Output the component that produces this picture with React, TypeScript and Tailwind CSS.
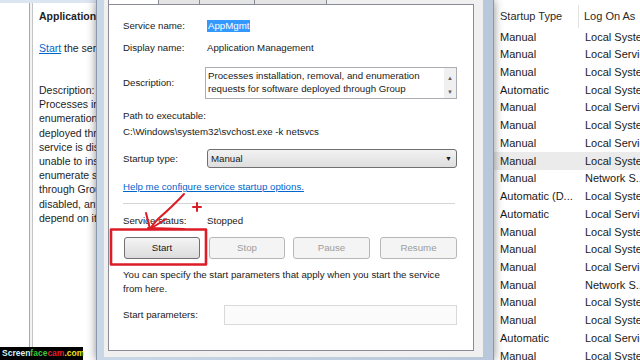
const services: [string, string][] = [
  ["Manual", "Local System"],
  ["Manual", "Local Service"],
  ["Manual", "Local System"],
  ["Automatic", "Local System"],
  ["Manual", "Local Service"],
  ["Manual", "Local System"],
  ["Manual", "Local Service"],
  ["Manual", "Local System"],
  ["Manual", "Network S..."],
  ["Automatic (D...", "Local System"],
  ["Automatic", "Local Service"],
  ["Manual", "Local System"],
  ["Manual", "Local System"],
  ["Manual", "Local Service"],
  ["Manual", "Network S..."],
  ["Manual", "Local System"],
  ["Manual", "Local System"],
  ["Automatic", "Local Service"],
  ["Manual", "Local System"],
]

const descLines = [
  "Description:",
  "Processes installation, removal, and",
  "enumeration requests for software",
  "deployed through Group Policy. If the",
  "service is disabled, users will be",
  "unable to install, remove, or",
  "enumerate software deployed",
  "through Group Policy. If this service is",
  "disabled, any services that explicitly",
  "depend on it will fail to start.",
]

function LeftPane() {
  return (
    <div className="flex h-full w-[96px] flex-none flex-col bg-white">
      <div className="h-[3px] bg-[#dce6f2]" />
      <div className="flex flex-1">
        <div className="w-[29px] bg-white" />
        <div className="w-px bg-[#a9a9a9]" />
        <div className="w-[2px] bg-[#f3f3f3]" />
        <div className="w-px bg-[#c4c4c4]" />
        <div className="min-w-0 flex-1 overflow-hidden whitespace-nowrap pl-[6px] pt-[6px] text-[10.5px] leading-[14px] text-[#1e1e1e]">
          <div className="font-bold">Application Management</div>
          <div className="mt-[18px]">
            <span className="text-[#0066cc] underline">Start</span> the service
          </div>
          <div className="mt-[28px] leading-[14.2px]">
            {descLines.map((l) => (
              <div key={l}>{l}</div>
            ))}
          </div>
        </div>
      </div>
    </div>
  )
}

function Button({ label, enabled, className }: { label: string; enabled?: boolean; className: string }) {
  return (
    <div
      className={
        enabled
          ? `flex h-[22px] items-center justify-center rounded-[3px] border border-[#707070] bg-gradient-to-b from-[#f4f4f4] to-[#dcdcdc] text-[#1a1a1a] ${className}`
          : `flex h-[22px] items-center justify-center rounded-[3px] border border-[#b5b8bb] bg-[#f4f4f4] text-[#9c9c9c] ${className}`
      }
    >
      {label}
    </div>
  )
}

function Dialog() {
  return (
    <div className="relative z-10 flex h-full w-[398px] flex-none flex-col border-x border-[#8a9aac] bg-gradient-to-r from-[#c9d7e6] to-[#b8c8da] pb-[3px] pl-[7px] pr-[10px] shadow-[0_0_9px_rgba(0,0,0,0.45)]">
      <div className="flex flex-1 flex-col bg-[#f0f0f0] pb-[6px] pl-[4px] pr-[9px]">
        <div className="flex h-[4px]">
          <div className="w-[50px] border-l border-[#898c95] bg-white" />
          <div className="w-[42px] border-x border-[#898c95] bg-[#e4e4e4]" />
          <div className="w-[55px] border-r border-[#898c95] bg-[#e4e4e4]" />
          <div className="w-[72px] border-r border-[#898c95] bg-[#e4e4e4]" />
        </div>
        <div className="flex flex-1 flex-col border border-[#898c95] bg-white pl-[14px] pt-[14px] text-[9.7px] leading-[14px] text-[#1a1a1a]">
          <div className="flex h-[14px] items-center">
            <div className="w-[84px]">Service name:</div>
            <div className="flex h-[12px] items-center bg-[#3399ff] px-px text-white">AppMgmt</div>
          </div>
          <div className="mt-[8px] flex h-[14px] items-center">
            <div className="w-[84px]">Display name:</div>
            <div>Application Management</div>
          </div>
          <div className="mt-[12px] flex h-[32px] items-center">
            <div className="w-[82px]">Description:</div>
            <div className="flex h-[32px] w-[252px] border border-[#abadb3] bg-white">
              <div className="flex-1 pl-[2px] pt-[1px] leading-[13px]">
                <div>Processes installation, removal, and enumeration</div>
                <div>requests for software deployed through Group</div>
              </div>
              <div className="flex w-[12px] flex-col items-center bg-[#f0f0f0] pt-[3px] text-[6px] leading-[14px] text-[#606060]">
                <div>▲</div>
                <div>▼</div>
              </div>
            </div>
          </div>
          <div className="mt-[10px] flex h-[14px] items-center">Path to executable:</div>
          <div className="mt-[2px] flex h-[14px] items-center">C:\Windows\system32\svchost.exe -k netsvcs</div>
          <div className="mt-[10px] flex h-[19px] items-center">
            <div className="w-[84px]">Startup type:</div>
            <div className="flex h-[19px] w-[250px] items-center justify-between rounded-[3px] border border-[#707070] bg-gradient-to-b from-[#f2f2f2] to-[#dedede] pl-[3px] pr-[4px]">
              <span>Manual</span>
              <span className="text-[7px]">▼</span>
            </div>
          </div>
          <div className="mt-[12px] flex h-[14px] items-center">
            <span className="text-[#0066cc] underline">Help me configure service startup options.</span>
          </div>
          <div className="mt-[9px] h-px w-[332px] bg-[#d5d5d5]" />
          <div className="mt-[10px] flex h-[14px] items-center">
            <div className="w-[84px]">Service status:</div>
            <div>Stopped</div>
          </div>
          <div className="mt-[9px] flex">
            <Button label="Start" enabled className="ml-px w-[76px]" />
            <Button label="Stop" className="ml-[9px] w-[76px]" />
            <Button label="Pause" className="ml-[8px] w-[77px]" />
            <Button label="Resume" className="ml-[10px] w-[77px]" />
          </div>
          <div className="mt-[9px]">
            <div>You can specify the start parameters that apply when you start the service</div>
            <div>from here.</div>
          </div>
          <div className="mt-[9px] flex h-[20px] items-center">
            <div className="w-[101px]">Start parameters:</div>
            <div className="h-[20px] w-[233px] border border-[#d9d9d9] bg-[#fbfbfb]" />
          </div>
        </div>
      </div>
    </div>
  )
}

function ServiceList() {
  return (
    <div className="flex min-w-0 flex-1 flex-col overflow-hidden whitespace-nowrap bg-white text-[11px] text-[#1a1a1a]">
      <div className="flex h-[28px] items-center pt-[5px] text-[#2a2a2a]">
        <div className="w-[85px] flex-none self-stretch border-r border-[#e2e2e2] pl-[6px] leading-[23px]">Startup Type</div>
        <div className="pl-[5px]">Log On As</div>
      </div>
      {services.map(([type, logon], i) => (
        <div key={i} className={`flex h-[17.72px] flex-none items-center ${i === 7 ? "bg-[#ebebeb]" : ""}`}>
          <div className="w-[85px] flex-none pl-[6px]">{type}</div>
          <div className="pl-[6px]">{logon}</div>
        </div>
      ))}
    </div>
  )
}

function Annotation() {
  return (
    <svg className="pointer-events-none absolute left-0 top-0 z-20" width="640" height="360" viewBox="0 0 640 360">
      <g fill="none" stroke="#dc1d27" strokeLinecap="round" strokeLinejoin="round">
        <rect x="111" y="229.5" width="95" height="35" strokeWidth="2.6" />
        <path d="M184 194 C176 203 166 212 158 219 C154 223 152 226 150 229" strokeWidth="2" />
        <path d="M146 213 L150 229 L166 219" strokeWidth="2" />
        <path d="M148 228 L184 229" strokeWidth="1.8" />
        <path d="M197 203 L197 211 M193 207 L201 207" strokeWidth="2" />
      </g>
    </svg>
  )
}

function Watermark() {
  return (
    <div className="absolute bottom-0 left-0 z-30 flex h-[13px] w-[83px] items-center bg-black pl-[2px] text-[8.5px] font-bold leading-none">
      <span className="text-[#d6f2f6]">Screen</span>
      <span className="text-[#39c93a]">face</span>
      <span className="text-[#e5202a]">cam</span>
      <span className="text-[#efe21c]">.com</span>
    </div>
  )
}

export default function App() {
  return (
    <div className="relative flex h-[360px] w-[640px] overflow-hidden bg-white font-['Liberation_Sans',Arial,sans-serif]">
      <LeftPane />
      <Dialog />
      <ServiceList />
      <Annotation />
      <Watermark />
    </div>
  )
}
